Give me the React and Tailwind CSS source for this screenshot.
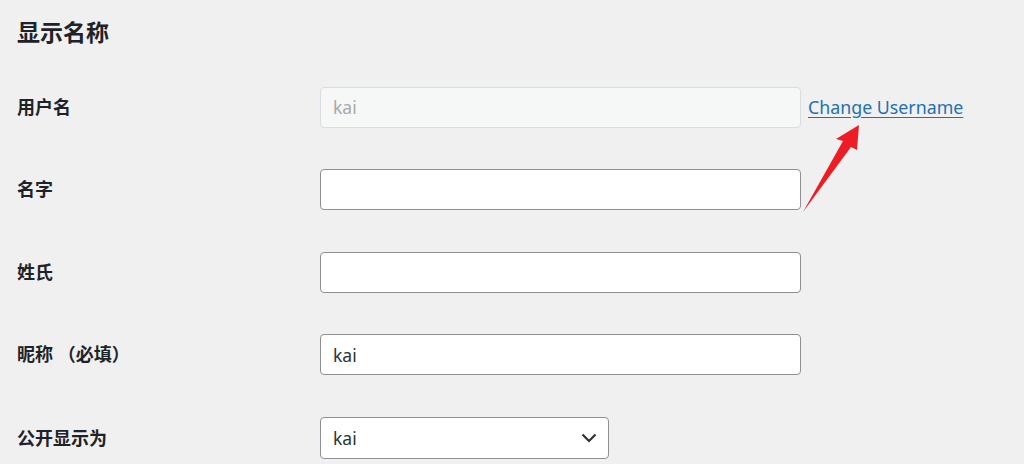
import React from 'react';

const FONT = { fontFamily: '"Noto Sans", "Noto Sans CJK SC", sans-serif' };

const rows = [
  { label: '用户名', value: 'kai', readOnly: true },
  { label: '名字', value: '' },
  { label: '姓氏', value: '' },
  { label: '昵称 （必填）', value: 'kai' },
];

function TextField({ value, readOnly }) {
  return (
    <div
      className={`w-[481px] h-[41px] rounded-[4px] border flex items-center pl-[12px] text-[17.5px] ${
        readOnly
          ? 'bg-[#f6f7f7] border-[#dcdcde] text-[#a7aaad]'
          : 'bg-white border-[#8c8f94] text-[#2c3338]'
      }`}
    >
      {value}
    </div>
  );
}

export default function App() {
  return (
    <div className="relative min-h-[464px] w-[1024px] bg-[#f0f0f1] text-[#1d2327] overflow-hidden" style={FONT}>
      <h2 className="pl-[17px] pt-[18px] text-[23px] leading-[28.6px] font-semibold">显示名称</h2>

      <div className="mt-[19.5px] flex flex-col">
        {rows.map((row) => (
          <div key={row.label} className="h-[82.5px] flex items-center">
            <div className="w-[320px] pl-[17px] text-[18px] font-semibold whitespace-pre">{row.label}</div>
            <TextField value={row.value} readOnly={row.readOnly} />
            {row.readOnly && (
              <a href="#" className="ml-[7px] text-[17.8px] text-[#2271b1] underline underline-offset-[3px]">
                Change Username
              </a>
            )}
          </div>
        ))}

        <div className="h-[82.5px] flex items-center pt-[2px]">
          <div className="w-[320px] pl-[17px] text-[18px] font-semibold">公开显示为</div>
          <div className="w-[289px] h-[42px] rounded-[4px] border border-[#8c8f94] bg-white flex items-center justify-between pl-[12px] pr-[11px] text-[17.5px] text-[#2c3338]">
            <span>kai</span>
            <svg width="16" height="10" viewBox="0 0 16 10" fill="none">
              <path d="M1.5 1.5 L8 8 L14.5 1.5" stroke="#2c3338" strokeWidth="2.2" />
            </svg>
          </div>
        </div>
      </div>

      {/* red annotation arrow */}
      <svg className="absolute left-0 top-0 pointer-events-none" width="1024" height="464">
        <polygon points="803,212 843,141 836,139 859,125 857,150 851,147" fill="#ee1c25" />
      </svg>
    </div>
  );
}
